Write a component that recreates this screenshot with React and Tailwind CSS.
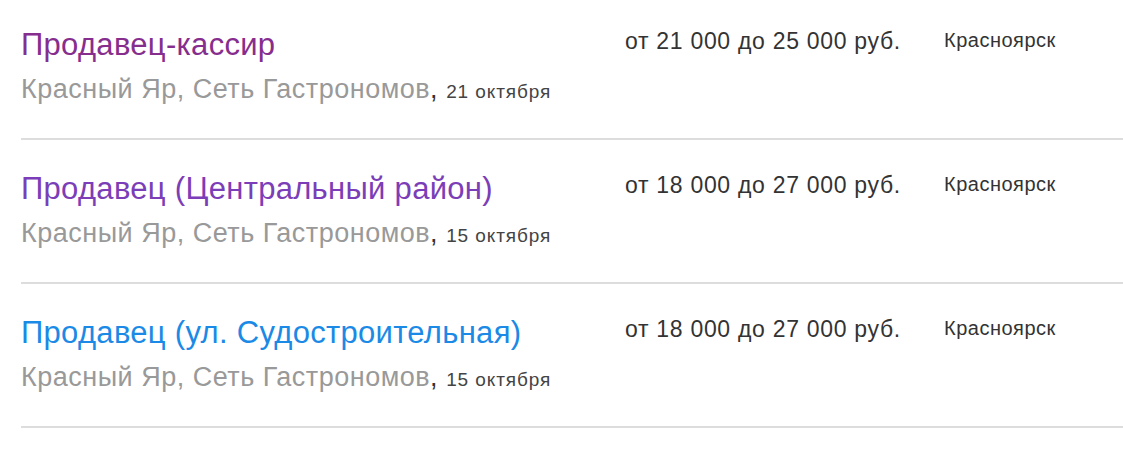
import React from 'react';

const vacancies = [
    { title: 'Продавец-кассир', color: 'text-[#862d8e]', date: '21 октября', salary: 'от 21 000 до 25 000 руб.' },
    { title: 'Продавец (Центральный район)', color: 'text-[#7b3db8]', date: '15 октября', salary: 'от 18 000 до 27 000 руб.' },
    { title: 'Продавец (ул. Судостроительная)', color: 'text-[#1b8ae6]', date: '15 октября', salary: 'от 18 000 до 27 000 руб.' },
];

const App = () => {
    return (
        <div className="bg-white min-h-screen overflow-hidden pl-[21px] font-['Liberation_Sans',Arial,sans-serif]">
            <div className="-mt-[4px]">
                {vacancies.map((v) => (
                    <div key={v.title} className="flex border-b-2 border-[#dddddd] h-[144px] pt-[31px]">
                        <div className="w-[604px]">
                            <a href="#" className={`block text-[31px] leading-[36px] tracking-[0.3px] ${v.color}`}>{v.title}</a>
                            <div className="mt-[11px] text-[27px] leading-[30px] tracking-[0.5px] text-[#999999]">
                                Красный Яр, Сеть Гастрономов<span className="text-[#333333]">,</span>{' '}
                                <span className="text-[19px] tracking-[0.9px] text-[#444444]">{v.date}</span>
                            </div>
                        </div>
                        <div className="w-[319px] text-[23px] leading-[28px] tracking-[0.7px] text-[#333333]">{v.salary}</div>
                        <div className="text-[20px] leading-[26px] tracking-[0.5px] text-[#333333]">Красноярск</div>
                    </div>
                ))}
            </div>
        </div>
    );
};

export default App;
